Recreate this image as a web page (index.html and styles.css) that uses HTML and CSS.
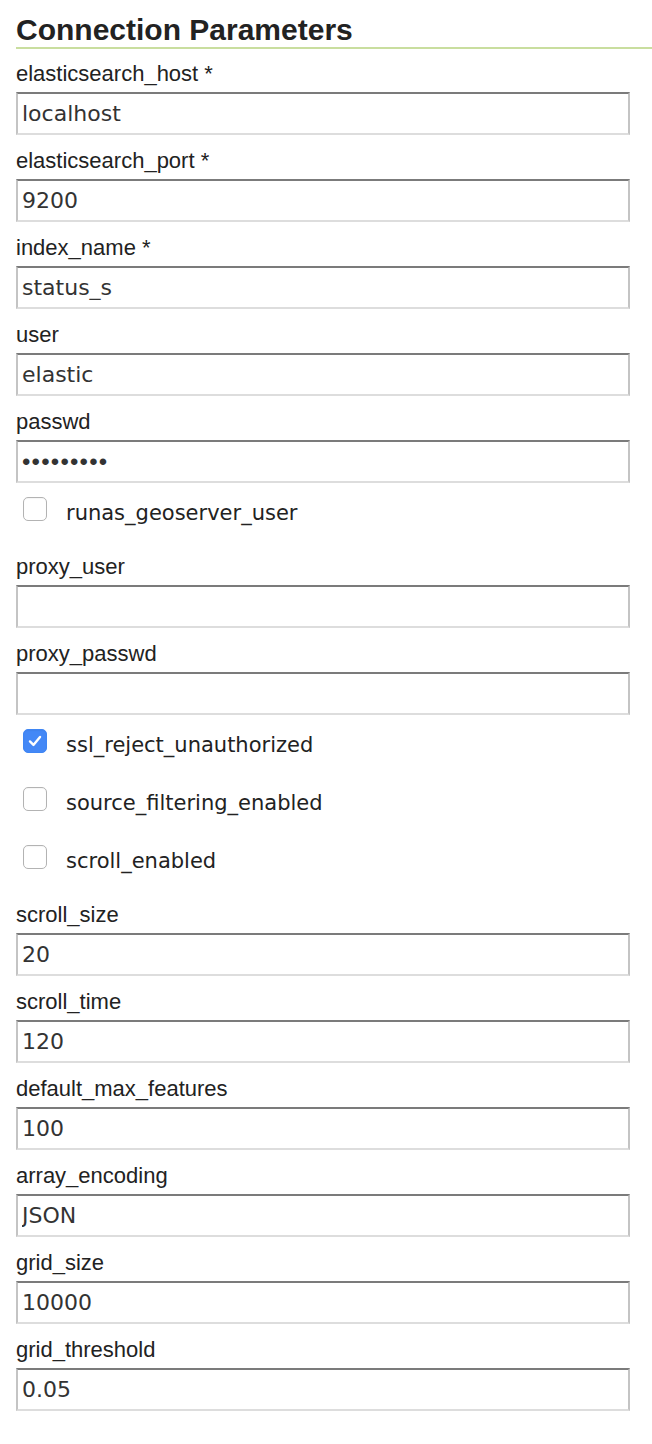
FILE: index.html
```html
<!DOCTYPE html>
<html>
<head>
<meta charset="utf-8">
<title>Connection Parameters</title>
<link rel="stylesheet" href="styles.css">
</head>
<body>
<div class="panel">
  <h2 class="title">Connection Parameters</h2>
  <div class="form">
    <div class="field">
      <label class="label">elasticsearch_host *</label>
      <input class="text" type="text" value="localhost">
    </div>
    <div class="field">
      <label class="label">elasticsearch_port *</label>
      <input class="text" type="text" value="9200">
    </div>
    <div class="field">
      <label class="label">index_name *</label>
      <input class="text" type="text" value="status_s">
    </div>
    <div class="field">
      <label class="label">user</label>
      <input class="text" type="text" value="elastic">
    </div>
    <div class="field">
      <label class="label">passwd</label>
      <input class="text pw" type="password" value="elastic12">
    </div>
    <div class="check">
      <span class="box"></span>
      <span class="check-label">runas_geoserver_user</span>
    </div>
    <div class="field">
      <label class="label">proxy_user</label>
      <input class="text" type="text" value="">
    </div>
    <div class="field">
      <label class="label">proxy_passwd</label>
      <input class="text" type="text" value="">
    </div>
    <div class="check">
      <span class="box checked"><svg viewBox="0 0 24 24" width="24" height="24"><path d="M6.5 12.5 L10.3 16.3 L17.5 7.6" fill="none" stroke="#fff" stroke-width="2.6" stroke-linecap="round" stroke-linejoin="round"/></svg></span>
      <span class="check-label">ssl_reject_unauthorized</span>
    </div>
    <div class="check">
      <span class="box"></span>
      <span class="check-label">source_filtering_enabled</span>
    </div>
    <div class="check">
      <span class="box"></span>
      <span class="check-label">scroll_enabled</span>
    </div>
    <div class="field">
      <label class="label">scroll_size</label>
      <input class="text" type="text" value="20">
    </div>
    <div class="field">
      <label class="label">scroll_time</label>
      <input class="text" type="text" value="120">
    </div>
    <div class="field">
      <label class="label">default_max_features</label>
      <input class="text" type="text" value="100">
    </div>
    <div class="field">
      <label class="label">array_encoding</label>
      <input class="text" type="text" value="JSON">
    </div>
    <div class="field">
      <label class="label">grid_size</label>
      <input class="text" type="text" value="10000">
    </div>
    <div class="field">
      <label class="label">grid_threshold</label>
      <input class="text" type="text" value="0.05">
    </div>
  </div>
</div>
</body>
</html>
```
FILE: styles.css
```css
html, body {
  margin: 0;
  padding: 0;
  background: #ffffff;
}

.panel {
  padding-left: 16px;
  font-family: "Liberation Sans", Arial, sans-serif;
  color: #222222;
}

.title {
  margin: 13px 0 0 0;
  font-family: "Liberation Sans", Arial, sans-serif;
  font-weight: bold;
  font-size: 30px;
  line-height: 34px;
  color: #222222;
  border-bottom: 2px solid #c9de9f;
}

.form {
  display: flex;
  flex-direction: column;
  padding-top: 12px;
}

.field {
  display: flex;
  flex-direction: column;
  margin-bottom: 13px;
}

.label {
  display: block;
  font-size: 22px;
  line-height: 25px;
  margin-bottom: 6px;
  color: #222222;
}

.text {
  box-sizing: border-box;
  width: 614px;
  height: 43px;
  margin: 0;
  padding: 0 4px;
  border-style: solid;
  border-width: 2px;
  border-color: #7b7b7b #c4c4c4 #dddddd #c4c4c4;
  border-radius: 0;
  background: #ffffff;
  font-family: "DejaVu Sans", Verdana, sans-serif;
  font-size: 22px;
  color: #333333;
  outline: none;
}

.pw {
  font-family: "Liberation Sans", Arial, sans-serif;
  font-size: 24px;
  letter-spacing: 1.2px;
  color: #333333;
}

.check {
  display: flex;
  align-items: center;
  height: 24px;
  margin: 1px 0 33px 7px;
}

.box {
  box-sizing: border-box;
  width: 24px;
  height: 24px;
  flex: 0 0 24px;
  border: 1px solid #b3b3b3;
  border-radius: 5px;
  background: #ffffff;
  box-shadow: inset 0 1px 1px rgba(0, 0, 0, 0.04);
  display: flex;
  align-items: center;
  justify-content: center;
}

.box.checked {
  border-color: #3f86f4;
  background: #4488f6;
}

.box svg {
  display: block;
}

.check-label {
  margin-left: 19px;
  margin-top: 7px;
  font-family: "DejaVu Sans", Verdana, sans-serif;
  font-size: 21px;
  line-height: 24px;
  color: #222222;
}
```
